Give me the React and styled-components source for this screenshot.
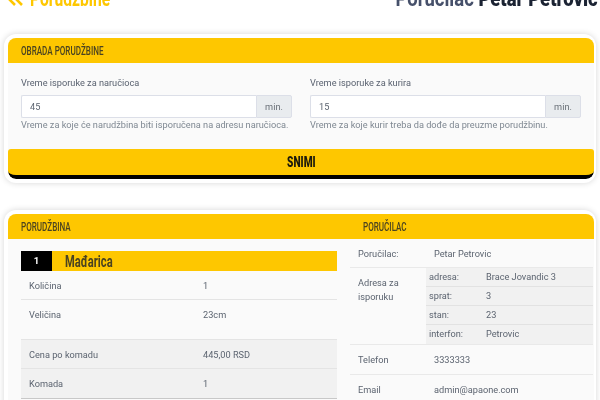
import React from 'react';
import styled, { createGlobalStyle } from 'styled-components';

const Global = createGlobalStyle`
  html, body { margin: 0; padding: 0; height: 400px; overflow: hidden; background: #fff; }
  body { font-family: Roboto, "Liberation Sans", sans-serif; font-size: 9.2px; color: #5c6470; }
`;

const heading = `Roboto, "Liberation Sans", sans-serif`;

const Page = styled.div`
  width: 600px;
  height: 400px;
  overflow: hidden;
  background: #fff;
  filter: blur(0.45px);
`;
// the page is scrolled a little in the screenshot, the title is cut off at the top
const Scrolled = styled.div`
  margin-top: -13px;
`;
// no condensed display font is installed, so headings are squeezed sideways
const Squeeze = styled.span`
  display: inline-block;
  white-space: nowrap;
  transform: scaleX(${p => p.$x});
  transform-origin: ${p => p.$from || 'left'} center;
`;
const TopBar = styled.div`
  height: 23px;
  padding: 0 2px 0 7px;
  display: flex;
  align-items: center;
  justify-content: space-between;
  font-family: ${heading};
  font-size: 22px;
  font-weight: 700;
  line-height: 23px;
`;
const Back = styled.div`
  display: flex;
  align-items: center;
  gap: 7px;
  color: #fec700;
`;
const Customer = styled.div`
  color: #46506a;
  b { color: #1b2333; font-weight: 900; }
`;
const Card = styled.section`
  margin: ${p => p.$top}px 4px 0;
  padding: 4px 2px 4px 4px;
  background: #fff;
  border-radius: 12px;
  box-shadow: 0 0 6px rgba(0, 0, 0, 0.16);
`;
const CardInner = styled.div`
  background: #fafafa;
  border-radius: 8px;
  overflow: hidden;
`;
const CardHead = styled.div`
  height: 25px;
  padding: 0 13px;
  display: grid;
  grid-template-columns: ${p => p.$split ? '342px 1fr' : '1fr'};
  align-items: center;
  background: #fec700;
  font-family: ${heading};
  font-size: 12.5px;
  font-weight: 500;
  color: #4a4320;
  text-transform: uppercase;
`;
const FormRow = styled.div`
  padding: 14px 13px 18px;
  display: grid;
  grid-template-columns: 271px 271px;
  column-gap: 18px;
`;
const Label = styled.div`
  height: 12px;
  line-height: 12px;
  margin-bottom: 6px;
  color: #5a6270;
`;
const InputGroup = styled.div`
  display: flex;
  height: 23px;
`;
const Input = styled.div`
  flex: 1;
  padding-left: 8px;
  line-height: 21px;
  background: #fff;
  border: 1px solid #dcdfe8;
  border-right: 0;
  border-radius: 2px 0 0 2px;
`;
const Addon = styled.div`
  width: 34px;
  line-height: 21px;
  text-align: center;
  background: #e9ecef;
  border: 1px solid #dcdfe8;
  border-radius: 0 2px 2px 0;
  color: #6a7078;
`;
const Help = styled.div`
  margin-top: 1px;
  line-height: 12px;
  color: #7f8892;
  white-space: nowrap;
`;
const SaveButton = styled.div`
  height: 26px;
  line-height: 27px;
  text-align: center;
  background: #fec700;
  border-bottom: 4px solid #000;
  border-radius: 3px 3px 8px 8px;
  font-family: ${heading};
  font-size: 14.5px;
  font-weight: 900;
  color: #1c1a0c;
`;
const Columns = styled.div`
  display: grid;
  grid-template-columns: 342px 1fr;
  height: 400px;
`;
const Left = styled.div`
  padding: 12px 13px 0 13px;
`;
const ItemHead = styled.div`
  height: 20px;
  display: flex;
  align-items: center;
  background: #fec700;
  font-family: ${heading};
  font-size: 17px;
  font-weight: 700;
  color: #4a4320;
`;
const ItemNo = styled.div`
  width: 31px;
  height: 20px;
  margin-right: 13px;
  line-height: 20px;
  text-align: center;
  background: #000;
  color: #fff;
  font-size: 9.5px;
`;
const Row = styled.div`
  display: grid;
  grid-template-columns: 174px 1fr;
  height: ${p => p.$h || 29}px;
  padding: 9px 0 0 8px;
  box-sizing: border-box;
  line-height: 11px;
  background: ${p => p.$gray ? '#f1f1f1' : 'transparent'};
  border-bottom: 1px solid ${p => p.$strong ? '#c8c8c8' : '#e4e4e4'};
`;
const Right = styled.div`
  padding: 0 1px 0 0;
`;
const InfoRow = styled.div`
  display: grid;
  grid-template-columns: 76px 1fr;
  height: ${p => p.$h || 29}px;
  padding: 9px 0 0 8px;
  box-sizing: border-box;
  line-height: 11px;
  border-bottom: 1px solid #e9e9e9;
`;
const AddressRow = styled.div`
  display: grid;
  grid-template-columns: 68px 1fr;
  padding-left: 8px;
  border-bottom: 1px solid #e9e9e9;
`;
const AddrLabel = styled.div`
  padding-top: 8px;
  line-height: 14px;
`;
const Nested = styled.div`
  background: #f1f1f1;
`;
const NestedRow = styled.div`
  display: grid;
  grid-template-columns: 57px 1fr;
  height: 19px;
  box-sizing: border-box;
  padding-left: 3px;
  line-height: 18px;
  border-bottom: 1px solid #e2e2e2;
  &:last-child { border-bottom: 0; }
`;

const Chevrons = () => (
  <svg width="16" height="16" viewBox="0 0 16 16" fill="none" stroke="#fec700" strokeWidth="2.6">
    <path d="M8 2 2 8l6 6M15 2 9 8l6 6" />
  </svg>
);

const address = [
  ['adresa:', 'Brace Jovandic 3'],
  ['sprat:', '3'],
  ['stan:', '23'],
  ['interfon:', 'Petrovic'],
];

export default function App() {
  return (
    <Page>
      <Global />
      <Scrolled>
        <TopBar>
          <Back><Chevrons /><Squeeze $x={0.71}>Porudžbine</Squeeze></Back>
          <Customer><Squeeze $x={0.84} $from="right">Poručilac <b>Petar Petrovic</b></Squeeze></Customer>
        </TopBar>
        <Card $top={24}>
          <CardInner>
            <CardHead><Squeeze $x={0.646}>Obrada porudžbine</Squeeze></CardHead>
            <FormRow>
              <div>
                <Label>Vreme isporuke za naručioca</Label>
                <InputGroup><Input>45</Input><Addon>min.</Addon></InputGroup>
                <Help>Vreme za koje će narudžbina biti isporučena na adresu naručioca.</Help>
              </div>
              <div>
                <Label>Vreme isporuke za kurira</Label>
                <InputGroup><Input>15</Input><Addon>min.</Addon></InputGroup>
                <Help>Vreme za koje kurir treba da dođe da preuzme porudžbinu.</Help>
              </div>
            </FormRow>
            <SaveButton><Squeeze $x={0.7} $from="center">SNIMI</Squeeze></SaveButton>
          </CardInner>
        </Card>
        <Card $top={27}>
          <CardInner>
            <CardHead $split>
              <span><Squeeze $x={0.646}>Porudžbina</Squeeze></span>
              <span><Squeeze $x={0.646}>Poručilac</Squeeze></span>
            </CardHead>
            <Columns>
              <Left>
                <ItemHead><ItemNo>1</ItemNo><Squeeze $x={0.657}>Mađarica</Squeeze></ItemHead>
                <Row><span>Količina</span><span>1</span></Row>
                <Row $h={40}><span>Veličina</span><span>23cm</span></Row>
                <Row $gray><span>Cena po komadu</span><span>445,00 RSD</span></Row>
                <Row $gray $h={30} $strong><span>Komada</span><span>1</span></Row>
              </Left>
              <Right>
                <InfoRow><span>Poručilac:</span><span>Petar Petrovic</span></InfoRow>
                <AddressRow>
                  <AddrLabel>Adresa za isporuku</AddrLabel>
                  <Nested>
                    {address.map(([k, v]) => (
                      <NestedRow key={k}><span>{k}</span><span>{v}</span></NestedRow>
                    ))}
                  </Nested>
                </AddressRow>
                <InfoRow $h={30}><span>Telefon</span><span>3333333</span></InfoRow>
                <InfoRow $h={30}><span>Email</span><span>admin@apaone.com</span></InfoRow>
              </Right>
            </Columns>
          </CardInner>
        </Card>
      </Scrolled>
    </Page>
  );
}
